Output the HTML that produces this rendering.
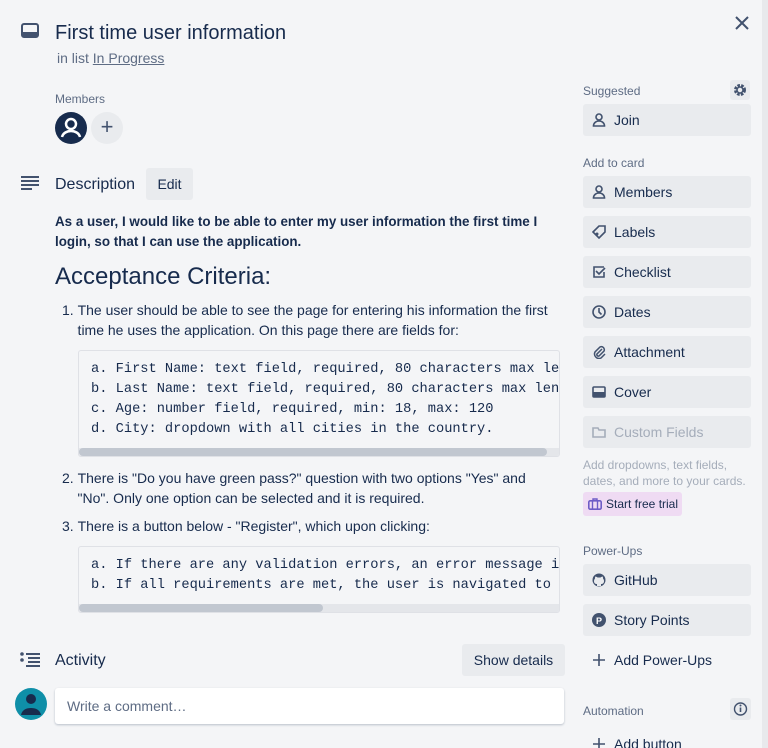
<!DOCTYPE html>
<html><head><style>
*{box-sizing:border-box;margin:0;padding:0}
html,body{width:768px;height:748px;overflow:hidden}
body{background:#f4f5f7;font-family:"Liberation Sans",sans-serif;color:#172b4d;position:relative}
.a{position:absolute}
.btn{position:absolute;left:583px;width:168px;height:32px;background:#e9ebee;border-radius:3px;font-size:14px;line-height:32px;padding-left:31px;color:#172b4d}
.btn svg{position:absolute;left:9px;top:9px}
.lbl{font-size:12px;color:#5e6c84;position:absolute}
.code{position:absolute;left:78px;width:482px;background:#f4f5f7;border:1px solid #dfe1e6;border-radius:3px;font-family:"Liberation Mono",monospace;font-size:13.7px;line-height:20px;padding:9px 12px;white-space:pre;overflow:hidden;color:#172b4d}
.sb{position:absolute;left:0;right:0;bottom:0;height:8px;background:#e4e6ea}
.sb div{height:8px;background:#c1c7d0;border-radius:4px}
p.t{position:absolute;font-size:14px;line-height:20px}
</style></head><body>
<div class="a" style="right:0;top:0;width:6px;height:748px;background:#e8e9ec"></div>
<svg class="a" style="left:21px;top:23px" width="18" height="16" viewBox="0 0 18 16"><rect x="1" y="1" width="16" height="13" rx="2" fill="none" stroke="#42526e" stroke-width="2"/><rect x="1" y="9" width="16" height="5" fill="#42526e"/></svg>
<div class="a" style="left:55px;top:21px;font-size:20px;line-height:24px;color:#172b4d">First time user information</div>
<div class="a" style="left:57px;top:50px;font-size:14px;color:#5e6c84">in list <u>In Progress</u></div>
<svg class="a" style="left:735px;top:16px" width="14" height="14"><path d="M1 1L13 13M13 1L1 13" stroke="#42526e" stroke-width="2"/></svg>
<div class="lbl" style="left:55px;top:92px">Members</div>
<svg class="a" style="left:55px;top:112px" width="32" height="32"><circle cx="16" cy="16" r="16" fill="#172b4d"/><circle cx="16" cy="12" r="5" fill="none" stroke="#fff" stroke-width="2.5"/><path d="M7 25c1-4 5-6 9-6s8 2 9 6" fill="none" stroke="#fff" stroke-width="2.5"/></svg>
<div class="a" style="left:91px;top:112px;width:32px;height:32px;border-radius:50%;background:#e9ebee;color:#42526e;font-size:22px;line-height:30px;text-align:center">+</div>
<svg class="a" style="left:21px;top:176px" width="18" height="14"><path d="M0 1h18M0 5h18M0 9h18M0 13h11" stroke="#42526e" stroke-width="2"/></svg>
<div class="a" style="left:55px;top:176px;font-size:16px">Description</div>
<div class="a" style="left:146px;top:168px;width:47px;height:32px;background:#e9ebee;border-radius:3px;font-size:14px;line-height:32px;text-align:center">Edit</div>
<p class="t" style="left:55px;top:212px;font-weight:bold;font-size:13.4px;width:510px">As a user, I would like to be able to enter my user information the first time I login, so that I can use the application.</p>
<div class="a" style="left:55px;top:263px;font-size:24px">Acceptance Criteria:</div>
<p class="t" style="left:62px;top:300px;width:500px">1.&nbsp;The user should be able to see the page for entering his information the first<br>&nbsp;&nbsp;&nbsp;&nbsp;time he uses the application. On this page there are fields for:</p>
<div class="code" style="top:350px;height:107px">a. First Name: text field, required, 80 characters max length
b. Last Name: text field, required, 80 characters max length
c. Age: number field, required, min: 18, max: 120
d. City: dropdown with all cities in the country.<div class="sb"><div style="width:468px"></div></div></div>
<p class="t" style="left:62px;top:468px;width:500px">2.&nbsp;There is "Do you have green pass?" question with two options "Yes" and<br>&nbsp;&nbsp;&nbsp;&nbsp;"No". Only one option can be selected and it is required.</p>
<p class="t" style="left:62px;top:516px;width:500px">3.&nbsp;There is a button below - "Register", which upon clicking:</p>
<div class="code" style="top:546px;height:67px">a. If there are any validation errors, an error message is shown
b. If all requirements are met, the user is navigated to the next page<div class="sb"><div style="width:244px"></div></div></div>
<svg class="a" style="left:20px;top:652px" width="20" height="16"><circle cx="2" cy="2" r="1.8" fill="#42526e"/><circle cx="2" cy="8" r="1.8" fill="#42526e"/><path d="M6 2h14M8 6h12M8 10h12M6 14h14" stroke="#42526e" stroke-width="2"/></svg>
<div class="a" style="left:55px;top:652px;font-size:16px">Activity</div>
<div class="a" style="left:462px;top:644px;width:103px;height:32px;background:#e9ebee;border-radius:3px;font-size:14px;line-height:32px;text-align:center">Show details</div>
<svg class="a" style="left:15px;top:688px" width="32" height="32"><circle cx="16" cy="16" r="16" fill="#0f8fa8"/><circle cx="16" cy="11" r="5" fill="#172b4d"/><path d="M6 27c1-5 5-7 10-7s9 2 10 7z" fill="#172b4d"/></svg>
<div class="a" style="left:55px;top:688px;width:509px;height:36px;background:#fff;border-radius:3px;box-shadow:0 1px 2px rgba(9,30,66,.25);font-size:14px;line-height:36px;padding-left:12px;color:#5e6c84">Write a comment…</div>

<div class="lbl" style="left:583px;top:84px">Suggested</div>
<svg class="a" style="left:730px;top:80px" width="20" height="20"><rect width="20" height="20" rx="3" fill="#e9ebee"/><circle cx="10" cy="10" r="4.5" fill="none" stroke="#42526e" stroke-width="3" stroke-dasharray="2.5 1.2"/><circle cx="10" cy="10" r="3" fill="none" stroke="#42526e" stroke-width="1.5"/></svg>
<div class="btn" style="top:104px"><svg width="14" height="14"><circle cx="7" cy="4" r="3" fill="none" stroke="#42526e" stroke-width="1.6"/><path d="M1.5 13c0-3 2.5-5 5.5-5s5.5 2 5.5 5z" fill="none" stroke="#42526e" stroke-width="1.6"/></svg>Join</div>
<div class="lbl" style="left:583px;top:156px">Add to card</div>
<div class="btn" style="top:176px"><svg width="14" height="14"><circle cx="7" cy="4" r="3" fill="none" stroke="#42526e" stroke-width="1.6"/><path d="M1.5 13c0-3 2.5-5 5.5-5s5.5 2 5.5 5z" fill="none" stroke="#42526e" stroke-width="1.6"/></svg>Members</div>
<div class="btn" style="top:216px"><svg width="14" height="14"><path d="M1 7L7 1h6v6l-6 6z" fill="none" stroke="#42526e" stroke-width="1.6"/><circle cx="5" cy="9" r="1.5" fill="#42526e"/></svg>Labels</div>
<div class="btn" style="top:256px"><svg width="14" height="14"><path d="M12 2H2v10h10V7" fill="none" stroke="#42526e" stroke-width="1.6"/><path d="M4 6l3 3 6-6" fill="none" stroke="#42526e" stroke-width="1.6"/></svg>Checklist</div>
<div class="btn" style="top:296px"><svg width="14" height="14"><circle cx="7" cy="7" r="6" fill="none" stroke="#42526e" stroke-width="1.6"/><path d="M7 3v4l2.5 2.5" fill="none" stroke="#42526e" stroke-width="1.6"/></svg>Dates</div>
<div class="btn" style="top:336px"><svg width="14" height="14"><path d="M10 4L5 9a1.5 1.5 0 002 2l5-5a3 3 0 00-4-4L3 7a4.5 4.5 0 006 6l4-4" fill="none" stroke="#42526e" stroke-width="1.5"/></svg>Attachment</div>
<div class="btn" style="top:376px"><svg width="14" height="14"><rect x="1" y="2" width="12" height="10" rx="1" fill="none" stroke="#42526e" stroke-width="1.6"/><rect x="1" y="7" width="12" height="5" fill="#42526e"/></svg>Cover</div>
<div class="btn" style="top:416px;color:#a5adba"><svg width="14" height="14"><path d="M1 3h5l1 2h6v7H1z" fill="none" stroke="#a5adba" stroke-width="1.6"/></svg>Custom Fields</div>
<p class="t" style="left:583px;top:457px;font-size:12px;line-height:16px;color:#a5adba;width:180px">Add dropdowns, text fields, dates, and more to your cards.</p>
<div class="a" style="left:583px;top:492px;width:99px;height:24px;background:#efdbf3;border-radius:3px;font-size:12px;line-height:24px;padding-left:23px;color:#172b4d"><svg class="a" style="left:5px;top:6px" width="14" height="12"><rect x="0.8" y="2.8" width="12.4" height="8.4" rx="1.5" fill="none" stroke="#6e5dc6" stroke-width="1.6"/><path d="M5 3V1h4v2M4.5 3v8M9.5 3v8" stroke="#6e5dc6" stroke-width="1.4" fill="none"/></svg>Start free trial</div>
<div class="lbl" style="left:583px;top:544px">Power-Ups</div>
<div class="btn" style="top:564px"><svg width="14" height="14"><circle cx="7" cy="7" r="6.5" fill="#42526e"/><path d="M5 13v-2c-2 0-3-1-3-3 0-1 .5-2 1-2.5 0-1 0-1.5.5-2 .5 0 1.5.5 2 1h3c.5-.5 1.5-1 2-1 .5.5.5 1 .5 2 .5.5 1 1.5 1 2.5 0 2-1 3-3 3v2" fill="#e9ebee"/></svg>GitHub</div>
<div class="btn" style="top:604px"><svg width="14" height="14"><circle cx="7" cy="7" r="7" fill="#42526e"/><text x="4" y="11" font-size="9" font-weight="bold" fill="#fff" font-family="Liberation Sans">P</text></svg>Story Points</div>
<div class="btn" style="top:644px;background:none"><svg width="14" height="14"><path d="M7 1v12M1 7h12" stroke="#42526e" stroke-width="1.6"/></svg>Add Power-Ups</div>
<div class="lbl" style="left:583px;top:704px">Automation</div>
<svg class="a" style="left:730px;top:698px" width="21" height="22"><rect width="21" height="22" rx="3" fill="#e9ebee"/><circle cx="10.5" cy="11" r="6" fill="none" stroke="#42526e" stroke-width="1.4"/><path d="M10.5 9.5v4.5" stroke="#42526e" stroke-width="1.6"/><circle cx="10.5" cy="7.5" r="1" fill="#42526e"/></svg>
<div class="btn" style="top:728px;background:none"><svg width="14" height="14"><path d="M7 1v12M1 7h12" stroke="#42526e" stroke-width="1.6"/></svg>Add button</div>
</body></html>
